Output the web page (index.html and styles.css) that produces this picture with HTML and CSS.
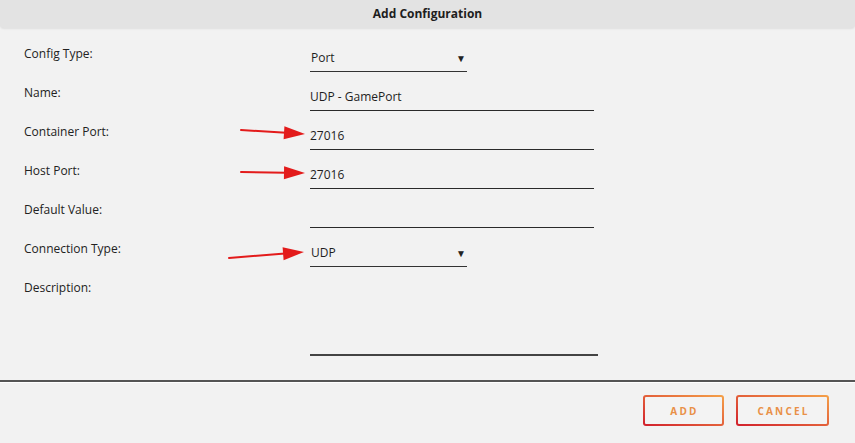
FILE: index.html
```html
<!DOCTYPE html>
<html>
<head>
<meta charset="utf-8">
<title>Add Configuration</title>
<link rel="stylesheet" href="styles.css">
</head>
<body>
<div class="dialog">
  <div class="header">Add Configuration</div>
  <div class="form">
    <div class="row">
      <div class="label">Config Type:</div>
      <div class="field select"><span>Port</span><span class="caret">&#9660;</span></div>
    </div>
    <div class="row">
      <div class="label">Name:</div>
      <div class="field text">UDP - GamePort</div>
    </div>
    <div class="row">
      <div class="label">Container Port:</div>
      <div class="field text">27016</div>
    </div>
    <div class="row">
      <div class="label">Host Port:</div>
      <div class="field text">27016</div>
    </div>
    <div class="row">
      <div class="label">Default Value:</div>
      <div class="field text"></div>
    </div>
    <div class="row">
      <div class="label">Connection Type:</div>
      <div class="field select"><span>UDP</span><span class="caret">&#9660;</span></div>
    </div>
    <div class="row desc-row">
      <div class="label">Description:</div>
      <div class="field textarea"></div>
    </div>
  </div>
  <div class="footer">
    <button class="btn add">ADD</button>
    <button class="btn cancel">CANCEL</button>
  </div>
  <svg class="arrows" width="855" height="443" viewBox="0 0 855 443">
    <g stroke="#e31b1b" stroke-width="2" fill="none" stroke-linecap="round">
      <line x1="241" y1="130" x2="286" y2="132.8"/>
      <line x1="241" y1="172" x2="286" y2="172.7"/>
      <line x1="229" y1="258" x2="285" y2="253.5"/>
    </g>
    <g fill="#e31b1b">
      <polygon points="305,134 283.6,139.2 284.4,126.2"/>
      <polygon points="305,173 283.9,179.2 284.1,166.2"/>
      <polygon points="304,252 283.6,260.2 282.6,247.2"/>
    </g>
  </svg>
</div>
</body>
</html>
```
FILE: styles.css
```css
html, body {
  margin: 0;
  padding: 0;
}
body {
  background: #f2f2f2;
  font-family: "Open Sans", "Noto Sans", sans-serif;
  color: #222;
}
.dialog {
  position: relative;
  width: 855px;
  height: 443px;
  background: #f2f2f2;
  overflow: hidden;
}
.header {
  height: 28px;
  line-height: 28px;
  background: #e3e3e3;
  text-align: center;
  font-weight: 700;
  font-size: 12px;
  color: #1e1e1e;
  border-radius: 0 0 4px 4px;
  box-shadow: 0 1px 2px rgba(0, 0, 0, 0.08);
}
.form {
  padding: 16px 0 0 24px;
  height: 352px;
  box-sizing: border-box;
}
.row {
  display: grid;
  grid-template-columns: 286px auto;
  height: 39px;
  align-items: start;
}
.label {
  font-size: 12px;
  line-height: 16px;
  padding-top: 2px;
  color: #222;
}
.field {
  font-size: 12px;
  line-height: 16px;
  padding: 6px 0 5px 0;
  border-bottom: 1px solid #2a2a2a;
  color: #1e1e1e;
  box-sizing: content-box;
  height: 16px;
}
.text {
  width: 284px;
}
.select {
  width: 157px;
  display: flex;
  justify-content: space-between;
  border-bottom: 1px solid #333;
}
.select span:first-child {
  padding-left: 1px;
}
.caret {
  font-size: 10px;
  padding-right: 1px;
  color: #222;
}
.desc-row {
  height: 80px;
}
.textarea {
  width: 288px;
  height: 66px;
  border-bottom: 2px solid #444;
  padding: 10px 0 0 0;
}
.footer {
  border-top: 2px solid #555;
  box-shadow: 0 1px 0 #fff inset;
  display: flex;
  justify-content: flex-end;
  gap: 12px;
  padding: 13px 26px 0 0;
}
.btn {
  height: 31px;
  border: 2px solid transparent;
  border-radius: 3px;
  background: linear-gradient(#f3f3f3, #f3f3f3) padding-box,
              linear-gradient(to top right, #d11f2c, #f5a249) border-box;
  color: #e99047;
  font-family: "Open Sans", "Noto Sans", sans-serif;
  font-weight: 700;
  font-size: 10px;
  letter-spacing: 2.2px;
  padding: 0 0 0 2px;
  cursor: pointer;
}
.add {
  width: 81px;
}
.cancel {
  width: 93px;
}
.arrows {
  position: absolute;
  left: 0;
  top: 0;
  pointer-events: none;
}
```
